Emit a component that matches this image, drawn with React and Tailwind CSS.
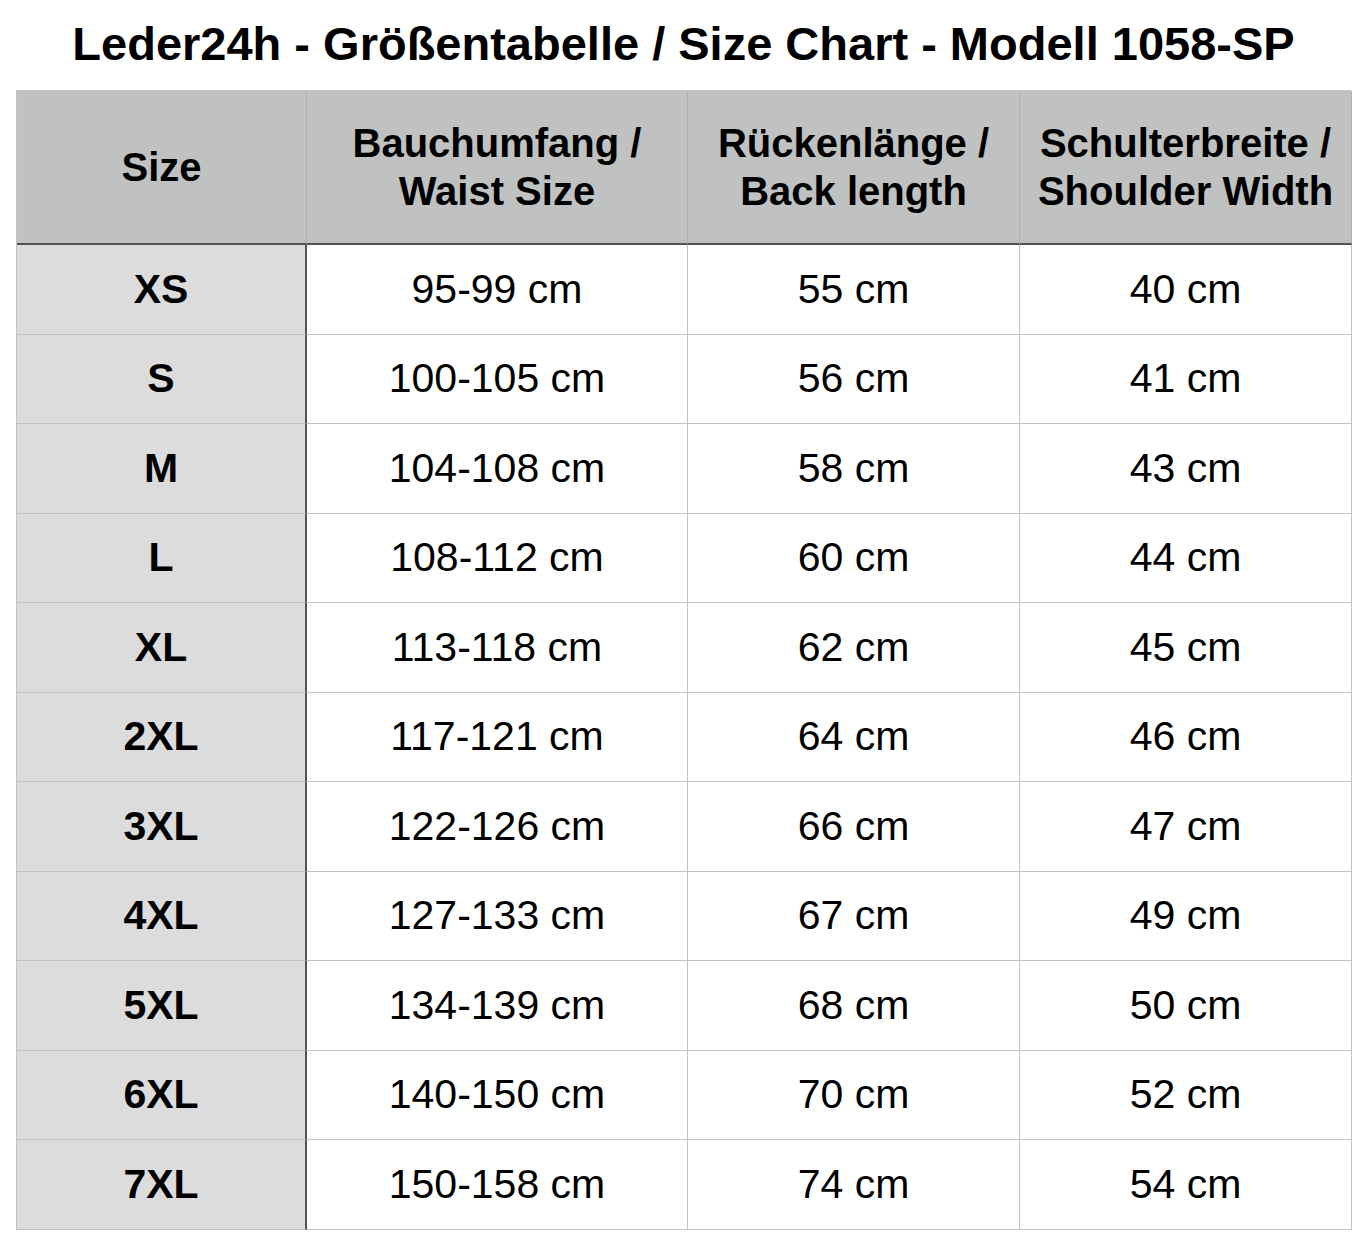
const rows = [
  ["XS", "95-99 cm", "55 cm", "40 cm"],
  ["S", "100-105 cm", "56 cm", "41 cm"],
  ["M", "104-108 cm", "58 cm", "43 cm"],
  ["L", "108-112 cm", "60 cm", "44 cm"],
  ["XL", "113-118 cm", "62 cm", "45 cm"],
  ["2XL", "117-121 cm", "64 cm", "46 cm"],
  ["3XL", "122-126 cm", "66 cm", "47 cm"],
  ["4XL", "127-133 cm", "67 cm", "49 cm"],
  ["5XL", "134-139 cm", "68 cm", "50 cm"],
  ["6XL", "140-150 cm", "70 cm", "52 cm"],
  ["7XL", "150-158 cm", "74 cm", "54 cm"],
];

const headers = [
  ["Size"],
  ["Bauchumfang /", "Waist Size"],
  ["Rückenlänge /", "Back length"],
  ["Schulterbreite /", "Shoulder Width"],
];

export default function App() {
  return (
    <div className="w-[1367px] h-[1248px] bg-white px-4 text-black font-['Liberation_Sans',Arial,sans-serif]">
      <h1 className="h-[90px] flex items-center justify-center text-[47px] font-bold leading-none pb-1">
        Leder24h - Größentabelle / Size Chart - Modell 1058-SP
      </h1>
      <div className="grid grid-cols-[290px_381px_332px_332px] border-t border-l border-[#c3c3c3]">
        {headers.map((lines, i) => (
          <div
            key={i}
            className="h-[154px] bg-[#c0c1c1] border-r border-[#b0b0b0] border-b-2 border-b-[#505050] flex flex-col items-center justify-center text-[40px] font-bold leading-[48px] text-center"
          >
            {lines.map((l) => (
              <span key={l}>{l}</span>
            ))}
          </div>
        ))}
        {rows.map((r) => (
          <div key={r[0]} className="contents">
            <div className="h-[89.5px] bg-[#dcdcdc] border-r-2 border-r-[#555] border-b border-[#c3c3c3] flex items-center justify-center text-[41px] font-bold">
              {r[0]}
            </div>
            {r.slice(1).map((v, j) => (
              <div
                key={j}
                className="h-[89.5px] bg-white border-r border-b border-[#c3c3c3] flex items-center justify-center text-[41px]"
              >
                {v}
              </div>
            ))}
          </div>
        ))}
      </div>
    </div>
  );
}
